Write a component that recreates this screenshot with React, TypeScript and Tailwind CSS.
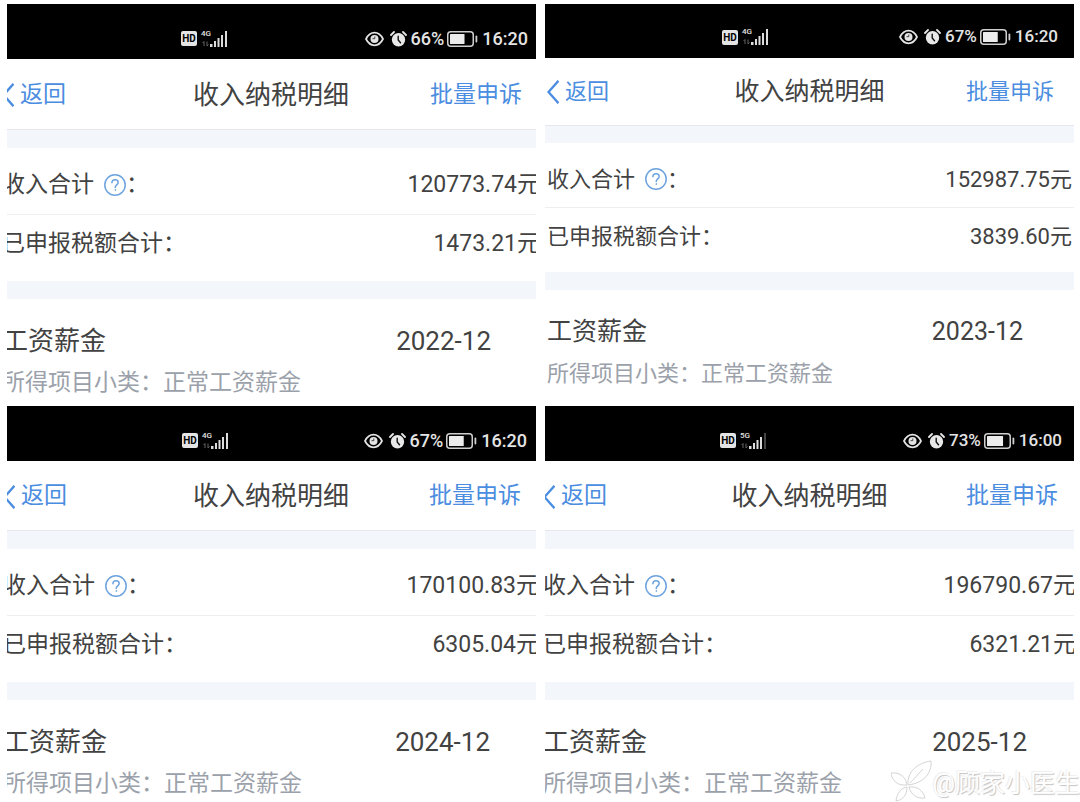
import clsx from 'clsx';

type Record = {
  network: string;
  weakSignal?: boolean;
  battery: number;
  time: string;
  income: string;
  tax: string;
  month: string;
  compact?: boolean;
  inset: string;
  statusText: string;
  headerHeight: string;
};

const records: Record[] = [
  {
    network: '4G',
    battery: 66,
    time: '16:20',
    income: '120773.74',
    tax: '1473.21',
    month: '2022-12',
    inset: '-ml-[5px] -mr-1',
    statusText: 'text-[18px] pl-[179px] pr-3',
    headerHeight: 'h-[71px]',
  },
  {
    network: '4G',
    battery: 67,
    time: '16:20',
    income: '152987.75',
    tax: '3839.60',
    month: '2023-12',
    compact: true,
    inset: 'mx-0.5',
    statusText: 'text-[17px] pl-[175px] pr-3.5',
    headerHeight: 'h-[68px]',
  },
  {
    network: '4G',
    battery: 67,
    time: '16:20',
    income: '170100.83',
    tax: '6305.04',
    month: '2024-12',
    inset: '-ml-1 -mr-[3px]',
    statusText: 'text-[18px] pl-[179px] pr-3',
    headerHeight: 'h-[70px]',
  },
  {
    network: '5G',
    weakSignal: true,
    battery: 73,
    time: '16:00',
    income: '196790.67',
    tax: '6321.21',
    month: '2025-12',
    inset: '-mx-0.5',
    statusText: 'text-[17px] pl-[177px] pr-3.5',
    headerHeight: 'h-[70px]',
  },
];

function SignalIcon({ weak }: { weak?: boolean }) {
  return (
    <svg className="w-[27px] h-4" viewBox="0 0 27 16" fill="#dcdcdc">
      <path d="M3 15V10.5M1.5 12 3 10.5M6 10.5V15M7.5 13.5 6 15" stroke="#666" strokeWidth="1" fill="none" />
      <rect x="9" y="13" width="2.5" height="3" />
      <rect x="13" y="10" width="2" height="6" />
      <rect x="16.5" y="7" width="2" height="9" />
      <rect x="20" y="4" width="2" height="12" />
      <rect x="24" y="0" width="2" height="16" fill={weak ? '#444' : '#dcdcdc'} />
    </svg>
  );
}

function EyeIcon() {
  return (
    <svg className="w-[19px] h-4" viewBox="0 0 19 16" fill="none" stroke="#e4e4e4">
      <path d="M1 8C3 4 6 1.7 9.5 1.7S16 4 18 8c-2 4-5 6.3-8.5 6.3S3 12 1 8Z" strokeWidth="1.7" />
      <circle cx="9.5" cy="8" r="4" fill="#e4e4e4" stroke="none" />
      <path d="M9.8 5.5v2.2H7.5" stroke="#444" strokeWidth="1" />
    </svg>
  );
}

function AlarmIcon() {
  return (
    <svg className="w-[17px] h-4" viewBox="0 0 17 16" fill="none" strokeLinecap="round">
      <circle cx="8.5" cy="8.8" r="6.7" fill="#e8e8e8" />
      <path d="M1 4 4 1M16 4l-3-3" stroke="#e8e8e8" strokeWidth="1.8" />
      <path d="M8.2 5.3V9l2.3 2.7" stroke="#111" strokeWidth="1.4" />
    </svg>
  );
}

function BatteryIcon({ level }: { level: number }) {
  return (
    <svg className="w-[31px] h-4" viewBox="0 0 31 16">
      <rect x="0.75" y="0.75" width="25.5" height="14.5" rx="3" fill="none" stroke="#cfcfcf" strokeWidth="1.5" />
      <rect x="3" y="3" width={(22 * level) / 100} height="10" rx="0.5" fill="#ececec" />
      <rect x="28.5" y="4.5" width="1.8" height="7" rx="0.9" fill="#cfcfcf" />
    </svg>
  );
}

function HelpIcon() {
  return (
    <svg className="w-[22px] h-[22px]" viewBox="0 0 22 22" fill="none" stroke="#6da3df" strokeLinecap="round">
      <circle cx="11" cy="11" r="10.2" strokeWidth="1.5" />
      <path d="M7.9 8.8c0-1.900 1.300-3.100 3.200-3.100s3.100 1.200 3.100 2.800c0 2.300-3 2.500-3 5" strokeWidth="1.500" />
      <circle cx="11.2" cy="16" r="0.4" fill="#6da3df" strokeWidth="0.8" />
    </svg>
  );
}

function StatusBar({ record }: { record: Record }) {
  return (
    <div className={clsx('bg-black text-[#e4e4e4]', record.compact ? 'h-[54px] pt-3' : 'h-[55px] pt-3.5')}>
      <div className={clsx('flex h-full items-center', record.inset, record.statusText)}>
        <span className="flex h-[15px] w-4 items-center justify-center rounded-xs bg-[#e4e4e4] text-[10px] font-bold text-black">
          HD
        </span>
        <span className="relative ml-1">
          <span className="absolute left-0 -top-0.5 text-[8px] leading-[10px] font-medium">{record.network}</span>
          <SignalIcon weak={record.weakSignal} />
        </span>
        <span className="ml-auto flex items-center">
          <EyeIcon />
          <span className="ml-1.5">
            <AlarmIcon />
          </span>
          <span className="ml-1 font-medium">{record.battery}%</span>
          <span className="ml-[3px]">
            <BatteryIcon level={record.battery} />
          </span>
          <span className="ml-1 font-medium">{record.time}</span>
        </span>
      </div>
    </div>
  );
}

function TaxRecord({ record }: { record: Record }) {
  const { compact, inset } = record;
  const body = compact ? 'text-[22px]' : 'text-[23px]';
  const title = compact ? 'text-[25px]' : 'text-[26px]';

  return (
    <section className="min-w-0 overflow-hidden whitespace-nowrap">
      <StatusBar record={record} />

      <header className={clsx('border-b border-[#e6e6ec]', record.headerHeight)}>
        <div className={clsx('grid h-full grid-cols-[1fr_auto_1fr] items-center', !compact && 'pt-0.5', inset)}>
          <button type="button" className={clsx('flex items-center gap-1.5 text-[#4b8de0]', body)}>
            <svg className="h-6 w-3" viewBox="0 0 12 24" fill="none" stroke="currentColor" strokeWidth="2.4">
              <path d="M11.5 0.8 1.5 12l10 11.2" />
            </svg>
            返回
          </button>
          <h1 className={title}>收入纳税明细</h1>
          <button type="button" className={clsx('justify-self-end pr-[18px] text-[#4b8de0]', body)}>
            批量申诉
          </button>
        </div>
      </header>

      <div className={clsx('bg-[#f3f6fb]', compact ? 'h-[17px]' : 'h-[18px]')} />

      <dl className={body}>
        <div className={clsx('border-b border-[#eeeeee] pt-2', compact ? 'h-[65px]' : 'h-[67px]')}>
          <div className={clsx('flex h-full items-center justify-between', inset)}>
            <dt className="flex items-center">
              收入合计
              <button type="button" aria-label="说明" className="ml-2.5">
                <HelpIcon />
              </button>
              ：
            </dt>
            <dd>{record.income}元</dd>
          </div>
        </div>
        <div className={clsx('pb-2', compact ? 'h-[64px]' : 'h-[66px]')}>
          <div className={clsx('flex h-full items-center justify-between', inset)}>
            <dt>已申报税额合计：</dt>
            <dd>{record.tax}元</dd>
          </div>
        </div>
      </dl>

      <div className="h-[18px] bg-[#f3f6fb]" />

      <div className={clsx(compact ? 'pt-6' : 'pt-6', inset)}>
        <div className={clsx('flex justify-between pr-[49px] leading-9', title)}>
          <h2>工资薪金</h2>
          <span>{record.month}</span>
        </div>
        <p className={clsx('mt-2 leading-8 text-[#9ba1aa]', body)}>所得项目小类：正常工资薪金</p>
      </div>
    </section>
  );
}

function Watermark() {
  return (
    <div className="absolute right-0 bottom-0 flex items-end text-[25px] leading-9 text-white [text-shadow:1px_1px_1px_#c4c4c4,-1px_-1px_1px_#eeeeee]">
      <svg className="h-[42px] w-[42px]" viewBox="0 0 42 42" fill="#ffffff" fillOpacity="0.8" stroke="#d4d4d4" strokeWidth="1">
        <path d="M17 25C16 12 26 3 40 1c1 12-7 22-23 24Z" />
        <path d="M16 25C7 26 1 21 0 13c9-1 15 4 16 12Z" />
        <path d="M16 27c-6 1-10 6-11 14 7-1 11-6 11-14Z" />
        <path d="M18 27c8-1 14 3 16 11-8 1-14-3-16-11Z" />
        <path d="M19 23 32 9" />
      </svg>
      <span>@顾家小医生</span>
    </div>
  );
}

export default function App() {
  return (
    <main className="relative grid grid-cols-2 gap-x-[9px] gap-y-[7px] bg-white pt-1 pr-1.5 pb-0.5 pl-[7px] font-['Roboto','Noto_Sans_CJK_SC',sans-serif] text-[#424242]">
      {records.map((record) => (
        <TaxRecord key={record.month} record={record} />
      ))}
      <Watermark />
    </main>
  );
}
